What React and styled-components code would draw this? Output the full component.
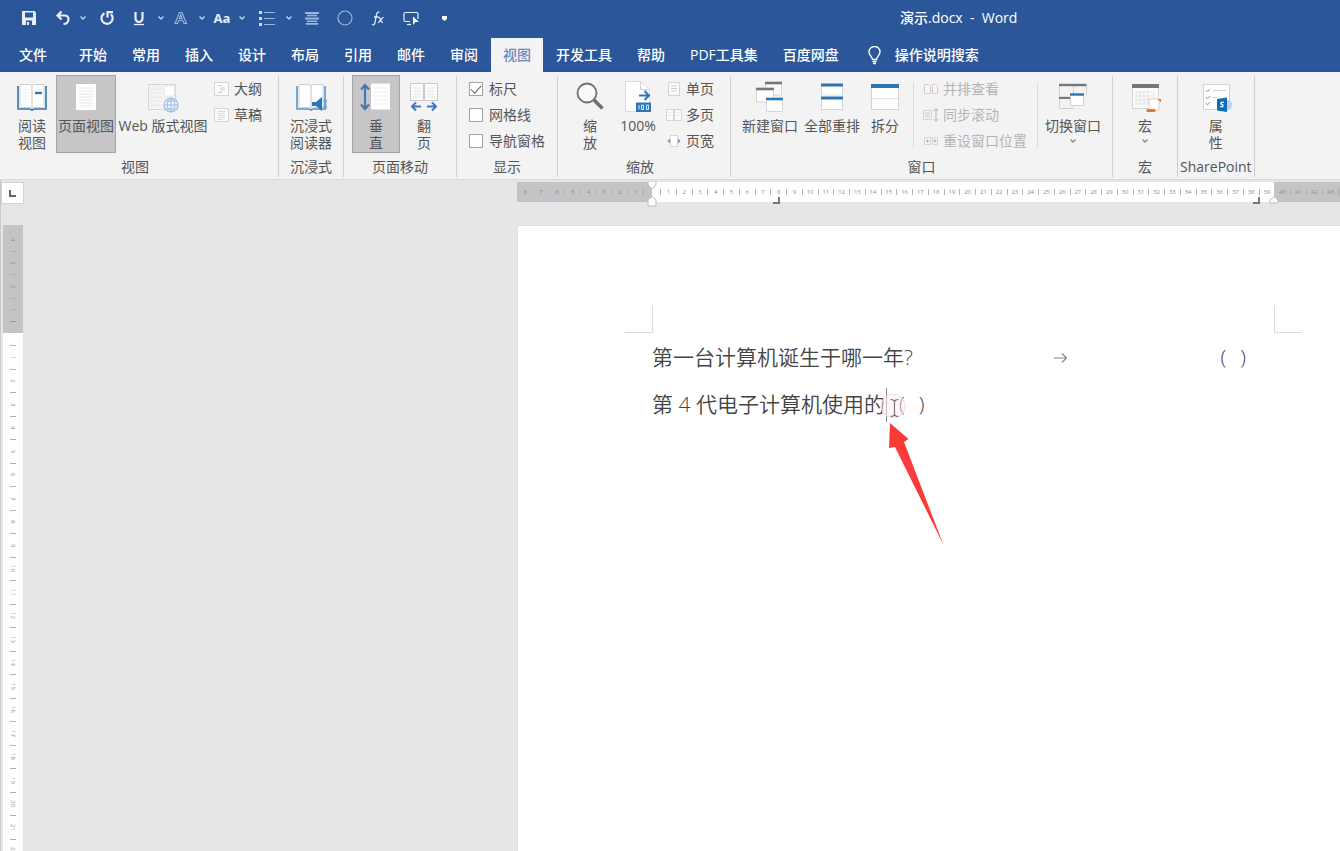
import React from "react";
import styled, { createGlobalStyle, css } from "styled-components";

const GlobalStyle = createGlobalStyle`
    * {
        box-sizing: border-box;
    }

    body {
        margin: 0;
        background-color: #e6e6e8;
        font-family: "Open Sans", "Noto Sans CJK SC", sans-serif;
        font-size: 14px;
    }

    button, input {
        font: inherit;
        color: inherit;
    }
`;

const Window = styled.div`
    display: flex;
    flex-direction: column;
    height: 100vh;
    overflow: hidden;
`;

/* ---------- title bar ---------- */

const TitleBar = styled.header`
    display: flex;
    align-items: center;
    height: 38px;
    padding: 0 0 2px 19px;
    background-color: #2b579a;
    color: #fff;
`;

const QuickAccess = styled.div`
    display: flex;
    align-items: center;
    flex: 0 0 881px;
`;

const QuickButton = styled.button`
    display: flex;
    align-items: center;
    justify-content: center;
    width: 20px;
    height: 24px;
    margin-right: ${(props) => props.$gap || 0}px;
    padding: 0;
    border: 0;
    background: none;
    color: ${(props) => (props.$dim ? "#9db6dc" : "#e8effa")};
    font-size: 13px;
    font-weight: bold;
`;

const FileName = styled.h1`
    margin: 0;
    font-size: 14px;
    font-weight: 500;
    line-height: 20px;
    white-space: pre;
`;

/* ---------- tabs ---------- */

const Tabs = styled.nav`
    display: flex;
    gap: 1px;
    height: 34px;
    background-color: #2b579a;
    border-bottom: 2px solid #1d57a3;
`;

const Tab = styled.button`
    height: 34px;
    padding: 0 12px;
    margin-left: ${(props) => (props.$first ? 7 : 0)}px;
    margin-right: ${(props) => (props.$first ? 7 : 0)}px;
    border: 0;
    background: none;
    color: #fff;
    font-weight: 500;
    line-height: 34px;
    white-space: nowrap;

    ${(props) => props.$active && css`
        background-color: #f3f3f4;
        color: #6f87b8;
    `}
`;

const TellMe = styled.button`
    display: flex;
    align-items: center;
    gap: 14px;
    height: 34px;
    margin-left: 16px;
    padding: 0;
    border: 0;
    background: none;
    color: #fff;
    font-weight: 500;
    line-height: 34px;
    white-space: nowrap;
`;

/* ---------- ribbon ---------- */

const Ribbon = styled.section`
    display: flex;
    flex: 0 0 106px;
    background-color: #f3f3f4;
    border-bottom: 1px solid #d9d9db;
    color: #555;
`;

const Group = styled.div`
    display: flex;
    flex-direction: column;
    align-items: center;
    margin: 4px 0 2px;
    padding: 0 ${(props) => props.$right || 8}px 0 ${(props) => props.$left || 8}px;
    border-right: 1px solid #cfcfd1;
`;

const Tools = styled.div`
    display: flex;
    align-items: flex-start;
    flex: 0 0 80px;
`;

const GroupName = styled.div`
    font-size: 14px;
    line-height: 21px;
    white-space: nowrap;
`;

const BigButton = styled.button`
    display: flex;
    flex-direction: column;
    align-items: center;
    gap: 4px;
    width: ${(props) => props.$width || 48}px;
    height: 78px;
    margin-top: -1px;
    padding: 5px 0 0;
    border: 1px solid ${(props) => (props.$active ? "#a3a2a4" : "transparent")};
    background-color: ${(props) => (props.$active ? "#c6c5c8" : "transparent")};
    line-height: 17px;
    white-space: pre;
`;

const SmallList = styled.div`
    display: flex;
    flex-direction: column;
    padding-left: ${(props) => props.$left || 0}px;
`;

const SmallButton = styled.button`
    display: flex;
    align-items: center;
    gap: 4px;
    height: 26px;
    padding: 0;
    border: 0;
    background: none;
    line-height: 26px;
    white-space: nowrap;

    &:disabled {
        color: #b4b4b6;
    }
`;

const CheckLabel = styled.label`
    display: flex;
    align-items: center;
    gap: 6px;
    height: 26px;
    line-height: 26px;
    white-space: nowrap;
`;

const CheckBox = styled.input`
    appearance: none;
    display: grid;
    place-items: center;
    width: 14px;
    height: 14px;
    margin: 0;
    border: 1px solid #a3a3a5;
    background-color: #fff;

    &:checked::after {
        content: "";
        width: 9px;
        height: 5px;
        margin-bottom: 3px;
        border-left: 1px solid #666;
        border-bottom: 1px solid #666;
        transform: rotate(-48deg);
    }
`;

const Divider = styled.div`
    width: 1px;
    height: 66px;
    margin: 6px ${(props) => props.$right || 0}px 0 ${(props) => props.$left || 0}px;
    background-color: #dcdcde;
`;

/* ---------- work area ---------- */

const WorkArea = styled.main`
    display: grid;
    grid-template-columns: 23px minmax(0, 1fr);
    grid-template-rows: 46px minmax(0, 1fr);
    flex: 1;
    min-height: 0;
    border-left: 1px solid #c9c9cb;
    background-color: #e6e6e8;
`;

const TabStop = styled.button`
    display: flex;
    align-items: center;
    justify-content: center;
    width: 23px;
    height: 22px;
    margin-top: 2px;
    padding: 0;
    border: 1px solid #d2d2d4;
    background-color: #fff;
`;

const TopRuler = styled.div`
    display: flex;
    height: 20px;
    margin: 2px 0 0 493px;
    color: #8d8d8f;
    font-size: 6px;
    line-height: 20px;
`;

const TopStrip = styled.div`
    position: relative;
    display: flex;
    align-items: center;
    flex: ${(props) => (props.$width ? `0 0 ${props.$width}px` : "1 1 0")};
    min-width: 0;
    padding: 0 ${(props) => props.$right || 0}px 0 ${(props) => props.$left || 0}px;
    background-color: ${(props) => (props.$margin ? "#c4c3c6" : "#fff")};
`;

const TopCell = styled.div`
    flex: ${(props) => (props.$fixed ? "0 0 16px" : "1 1 0")};
    height: 6px;
    border-left: 1px solid ${(props) => (props.$plain ? "transparent" : "#b5b5b7")};
    line-height: 6px;
    text-align: center;
`;

const EndTick = styled.div`
    width: 1px;
    height: 6px;
    background-color: #a5a5a7;
`;

const Marker = styled.svg`
    position: absolute;
    left: ${(props) => props.$x}px;
    top: ${(props) => props.$y}px;
    z-index: 1;
`;

const SideRuler = styled.div`
    display: flex;
    flex-direction: column;
    width: 20px;
    margin: -1px 0 0 2px;
    min-height: 0;
    overflow: hidden;
    background-color: #fff;
    color: #8d8d8f;
    font-size: 6px;
`;

const SideStrip = styled.div`
    display: flex;
    flex-direction: column;
    align-items: center;
    flex: 0 0 ${(props) => props.$height}px;
    padding: ${(props) => (props.$margin ? "2px 0 11px" : "12px 0 0")};
    background-color: ${(props) => (props.$margin ? "#c4c3c6" : "#fff")};
`;

const SideCell = styled.div`
    display: flex;
    align-items: center;
    justify-content: center;
    flex: 1 1 0;
    width: 6px;
    min-height: 0;
    border-top: 1px solid ${(props) => (props.$first ? "transparent" : "#b0b0b2")};
    writing-mode: vertical-rl;
`;

const SideTick = styled.div`
    width: 6px;
    height: 1px;
    background-color: #98989a;
`;

const Page = styled.article`
    margin-left: 494px;
    padding: 80px 38px 0 107px;
    background-color: #fff;
    box-shadow: 0 0 0 1px #e0e0e1;
    color: #444;
    font-size: 21px;
    font-weight: 350;
`;

const CropMarks = styled.div`
    display: flex;
    justify-content: space-between;
    margin-bottom: 1px;
`;

const CropMark = styled.div`
    width: 28px;
    height: 27px;
    border-bottom: 1px solid #dadada;
    border-left: ${(props) => (props.$right ? "1px solid #dadada" : "0")};
    border-right: ${(props) => (props.$right ? "0" : "1px solid #dadada")};
`;

const Paragraph = styled.p`
    display: flex;
    margin: 0 56px 0 27px;
    line-height: 47px;
    white-space: pre;
`;

const Answer = styled.span`
    display: flex;
    gap: 14px;
`;

const TabMark = styled.span`
    display: flex;
    align-items: center;
    justify-content: center;
    flex: 1;
    padding-right: 12px;
`;

const Insertion = styled.span`
    position: relative;
    width: 14px;
`;

const Caret = styled.span`
    position: absolute;
    left: 1px;
    top: 7px;
    width: 1px;
    height: 34px;
    background-color: #888;
`;

const Pointer = styled.svg`
    position: absolute;
    left: -5px;
    top: 7px;
    overflow: visible;
`;

/* ---------- icons ---------- */

const BLUE = "#2e75b6";

const Chevron = ({ color = "#c5d3ea" }) => (
    <svg width="8" height="6" viewBox="0 0 8 6" fill="none" stroke={color} strokeWidth="1.4">
        <path d="M1.5 1.5 4 4l2.500-2.500" />
    </svg>
);

const SaveIcon = () => (
    <svg width="14" height="14" viewBox="0 0 14 14">
        <path d="M0 0h12.500L14 1.500V14H0z" fill="currentColor" />
        <path d="M3 1.500h8v5H3zM4 9.500h6V14H4z" fill="#2b579a" />
        <path d="M5 11h2v3H5z" fill="currentColor" />
    </svg>
);

const UndoIcon = () => (
    <svg width="16" height="16" viewBox="0 0 16 16" fill="none" stroke="currentColor" strokeWidth="2.200">
        <path d="M6.500 1.500 2.500 5.500l4 4M3 5.500h6.500c3 0 4 1.600 4 3.800S12 14 8.500 14" />
    </svg>
);

const RedoIcon = () => (
    <svg width="16" height="16" viewBox="0 0 16 16" fill="none" stroke="currentColor" strokeWidth="2.200">
        <path d="M5.500 3.200a5.600 5.600 0 1 0 6.500 1M8.500 7.500V2.200H14" />
    </svg>
);

const UnderlineIcon = () => (
    <svg width="12" height="15" viewBox="0 0 12 15" fill="none" stroke="currentColor">
        <path d="M2.500 1v6.500a3.500 3.500 0 0 0 7 0V1" strokeWidth="2.200" />
        <path d="M1 13.500h10" strokeWidth="1.300" />
    </svg>
);

const OutlineAIcon = () => (
    <svg width="14" height="14" viewBox="0 0 14 14" fill="none" stroke="currentColor" strokeWidth="1.100">
        <path d="M1 12.500 5.500 1.500h2.500l4.500 11h-2.500l-1-2.700H4.500l-1 2.700zM5.300 7.600h3L6.800 3.800z" />
    </svg>
);

const BulletsIcon = () => (
    <svg width="16" height="15" viewBox="0 0 16 15" fill="currentColor">
        <path d="M0 0h3v3H0zM0 6h3v3H0zM0 12h3v3H0z" fill="#cbd9ef" />
        <path d="M5 1h11v1H5zM5 7h11v1H5zM5 13h11v1H5z" />
    </svg>
);

const CenterIcon = () => (
    <svg width="14" height="13" viewBox="0 0 14 13" fill="currentColor">
        <path d="M0 0h14v2H0zM2 2.800h10v1.500H2zM0 5.500h14v2H0zM2 8.400h10v1.500H2zM1 11h12v1.800H1z" />
    </svg>
);

const CircleIcon = () => (
    <svg width="16" height="16" viewBox="0 0 16 16" fill="none" stroke="currentColor" strokeWidth="1.200">
        <circle cx="8" cy="8" r="7" />
    </svg>
);

const FormulaIcon = () => (
    <svg width="14" height="15" viewBox="0 0 14 15" fill="none" stroke="currentColor" strokeWidth="1.300">
        <path d="M8.500 1.500C6.500.500 5.700 2 5.300 4.500L4 11.500c-.400 2-1.300 2.800-3 2M3 6h4.500M7.500 6.500c2-1 2 5.500 4.500 5M12.500 6.300c-2 0-3.500 5.500-5.500 5.200" />
    </svg>
);

const ShapeRunIcon = () => (
    <svg width="17" height="15" viewBox="0 0 17 15" fill="none" stroke="currentColor" strokeWidth="1.200">
        <path d="M7 10.500H2.500a1.500 1.500 0 0 1-1.500-1.500V3a1.500 1.500 0 0 1 1.500-1.500h11A1.500 1.500 0 0 1 15 3v5" />
        <path d="M10 5.500 16 11h-3.500L10 14z" fill="#fff" stroke="none" />
        <path d="M4 13.500h4" />
    </svg>
);

const BulbIcon = () => (
    <svg width="13" height="19" viewBox="0 0 13 19" fill="none" stroke="#fff" strokeWidth="1.400">
        <path d="M4.500 13.500C4.500 11 1 9.500 1 6a5.500 5.500 0 0 1 11 0c0 3.500-3.500 5-3.500 7.500z" />
        <path d="M4.500 15.500h4M5 17.500h3" />
    </svg>
);

const Big = ({ children }) => (
    <svg width="32" height="32" viewBox="0 0 32 32" fill="none">{children}</svg>
);

const ReadIcon = () => (
    <Big>
        <path d="M2 5v23h12l2 1 2-1h12V5" stroke={BLUE} strokeWidth="1.600" />
        <path d="M4 3.500h10l2 1 2-1h10v23H18l-2 1-2-1H4z" fill="#fff" stroke="#d0d0d2" />
        <path d="M16 5v22" stroke="#c4c4c6" />
        <path d="M6.500 9h7M6.500 12h7M6.500 15h7M6.500 18h7M19 9h7" stroke="#ececee" />
        <path d="M19 12h7" stroke={BLUE} strokeWidth="2.400" />
    </Big>
);

const PageIcon = () => (
    <Big>
        <path d="M6 3h20v26H6z" fill="#fff" />
        <path d="M9 7h14M9 10h14M9 13h14M9 16h14M9 19h14M9 22h14M9 25h14" stroke="#e6e6e8" />
    </Big>
);

const WebIcon = () => (
    <Big>
        <path d="M1.500 3.500h27v25h-27z" fill="#f3f3f4" stroke="#d6d6d8" />
        <path d="M4 8h10M4 12h10M4 16h10M4 20h10M4 24h10" stroke="#e6e6e8" />
        <path d="M17 5h10v10H17z" fill="#fff" stroke="#e6e6e8" />
        <circle cx="24" cy="24" r="7" fill="#eef4fc" stroke="#9dbbe2" strokeWidth="1.200" />
        <path d="M17 24h14M24 17v14M18.500 20h11M18.500 28h11M24 17c-5 4-5 10 0 14M24 17c5 4 5 10 0 14" stroke="#9dbbe2" />
    </Big>
);

const ImmersiveIcon = () => (
    <Big>
        <path d="M2 5v23h12l2 1 2-1h12V5" stroke="#5b93cb" strokeWidth="1.600" />
        <path d="M4 3.500h10l2 1.500 2-1.500h10v23H18l-2 1-2-1H4z" fill="#fff" stroke="#d0d0d2" />
        <path d="M16 5v22" stroke="#c4c4c6" />
        <path d="M17 21h4l6-5v14l-6-5h-4z" fill={BLUE} />
        <path d="M28.500 19.500q3 3.500 0 7M30 17q4.500 6 0 12" stroke="#6f9fd2" />
    </Big>
);

const VerticalIcon = () => (
    <Big>
        <path d="M11 2.500h19v26H11z" fill="#fff" />
        <path d="M14 7h13M14 11h13M14 15h13M14 19h13M14 23h13" stroke="#ececee" />
        <path d="M5 5v22M1 8.500 5 4l4 4.500M1 23.500 5 28l4-4.500" stroke="#4577b4" strokeWidth="2.200" />
    </Big>
);

const FlipIcon = () => (
    <Big>
        <path d="M2.500 2.500h13v17h-13zM16.500 2.500h13v17h-13z" fill="#fbfbfb" stroke="#c8c8ca" />
        <path d="M5 7h8M5 10h8M5 13h8M5 16h8M19 7h8M19 10h8M19 13h8M19 16h8" stroke="#e8e8ea" />
        <path d="M4 25.500h9M19 25.500h9M8 21.500l-4 4 4 4M24 21.500l4 4-4 4" stroke="#3e79bf" strokeWidth="2" />
    </Big>
);

const ZoomIcon = () => (
    <Big>
        <circle cx="13" cy="12" r="9.500" fill="#fafafa" stroke="#6f6f70" strokeWidth="1.800" />
        <path d="m20 19 8.500 8.500" stroke="#6f6f70" strokeWidth="3.600" />
    </Big>
);

const HundredIcon = () => (
    <Big>
        <path d="M3.500.500h15l9 8v22h-24z" fill="#fff" stroke="#dadadc" />
        <path d="M18.500.500v8h9" stroke="#d0d0d2" />
        <path d="M17 14.500h10M22.500 10l4.500 4.500-4.500 4.500" stroke={BLUE} strokeWidth="2" />
        <path d="M14 21.500h15V31H14z" fill={BLUE} />
        <path d="M17 24v4.500M19.500 24h2v4.500h-2zM24.500 24h2v4.500h-2z" stroke="#d6e6f8" />
    </Big>
);

const NewWindowIcon = () => (
    <Big>
        <path d="M11.500 2v12h16V2" fill="#fafafa" stroke="#d4d4d6" />
        <path d="M11 2h17" stroke="#777" strokeWidth="2.600" />
        <path d="M2.500 8v13h17V8" fill="#fff" stroke="#d4d4d6" />
        <path d="M2 8h18" stroke="#777" strokeWidth="2.600" />
        <path d="M12.500 18v12.500h16V18" fill="#fff" stroke="#d4d4d6" />
        <path d="M12 18h17" stroke={BLUE} strokeWidth="2.600" />
    </Big>
);

const ArrangeIcon = () => (
    <Big>
        <path d="M5.500 3.500h21v25h-21z" fill="#fff" stroke="#d4d4d6" />
        <path d="M5 4h22M5 17h22" stroke={BLUE} strokeWidth="2.800" />
        <path d="M5 14h22" stroke="#e4e4e6" />
    </Big>
);

const SplitIcon = () => (
    <Big>
        <path d="M2.500 4.500h27v24h-27z" fill="#fff" stroke="#d4d4d6" />
        <path d="M2 5h28" stroke={BLUE} strokeWidth="4" />
        <path d="M3 17.500h26" stroke="#e4e4e6" />
    </Big>
);

const SwitchIcon = () => (
    <Big>
        <path d="M2.500 4v23.500H17M16.500 4v10M29.500 4v10M3 16h12" stroke="#d0d0d2" />
        <path d="M2 4h27.500" stroke="#777" strokeWidth="2.400" />
        <path d="M2 17h12" stroke="#777" strokeWidth="2" />
        <path d="M13.500 13v11.500h13V13" fill="#fff" stroke="#d0d0d2" />
        <path d="M13 13.500h14" stroke={BLUE} strokeWidth="2.400" />
    </Big>
);

const MacroIcon = () => (
    <Big>
        <path d="M3.500 4.500h26v23h-26z" fill="#fafafa" stroke="#d4d4d6" />
        <path d="M3 5h27" stroke="#777" strokeWidth="4" />
        <path d="M7 11h18v12H7zM7 15h18M7 19h18M11 11v12M15 11v12M19 11v12" stroke="#e2e2e4" />
        <path d="M20 18h10v11H20z" fill="#fff" stroke="#f0cdb4" />
        <path d="M29 18.500h2.500V21M18 28.500h8v2h-8z" fill="#e07b35" stroke="#e07b35" />
    </Big>
);

const PropertyIcon = () => (
    <Big>
        <path d="M3.500 3.500h26v25h-26z" fill="#fff" stroke="#d4d4d6" />
        <path d="m6 9 1.500 2L10 8M6 16l1.500 2 2.500-3M6 22l1.500 2 2.500-3" stroke="#999" />
        <path d="M13 9.500h13M13 16.500h4" stroke="#d0d0d2" />
        <circle cx="27" cy="24" r="5" fill="#b9d4f0" />
        <path d="m17 18 10-1.500V31L17 29.500z" fill="#0f6cbd" />
        <path d="M24 21.500c-3-1-4 1-2 2s1 3-2 2" stroke="#fff" strokeWidth="1.300" />
    </Big>
);

const Small = ({ children }) => (
    <svg width="16" height="16" viewBox="0 0 16 16" fill="none">{children}</svg>
);

const OutlineIcon = () => (
    <Small>
        <path d="M.500 1.500h14v13H.500z" fill="#fbfbfb" stroke="#d4d4d6" />
        <path d="M4 4.500h4M6 7h5M6 9h5M4 11.500h4" stroke="#d0d0d2" />
    </Small>
);

const DraftIcon = () => (
    <Small>
        <path d="M.500 1.500h14v13H.500z" fill="#fbfbfb" stroke="#d4d4d6" />
        <path d="M4 4.500h7M4 6.500h7M4 8.500h7M4 10.500h7M4 12.500h5" stroke="#dadadc" />
    </Small>
);

const OnePageIcon = () => (
    <Small>
        <path d="M2.500 1.500h11v13h-11z" fill="#fbfbfb" stroke="#d4d4d6" />
        <path d="M5 5h6M5 7.500h6M5 10h6" stroke="#d0d0d2" />
    </Small>
);

const TwoPageIcon = () => (
    <Small>
        <path d="M.500 2.500h7v11h-7zM8.500 2.500h7v11h-7z" fill="#fbfbfb" stroke="#d4d4d6" />
        <path d="M2.500 5.500h3M2.500 8h3M10.500 5.500h3M10.500 8h3" stroke="#e2e2e4" />
    </Small>
);

const PageWidthIcon = () => (
    <Small>
        <path d="M4.500 2.500h7v11h-7z" fill="#fff" stroke="#d4d4d6" />
        <path d="M4 5.500 1.500 8 4 10.500zM12 5.500l2.500 2.500-2.500 2.500z" fill="#7596c4" />
    </Small>
);

const SideBySideIcon = () => (
    <Small>
        <path d="M1.500 3.500h4l2 2v7h-6zM9.500 3.500h3l2 2v7h-5z" fill="#faf5f7" stroke="#d6cbd0" />
    </Small>
);

const SyncIcon = () => (
    <Small>
        <path d="M.500 3.500h8v9h-8zM2 6h5M2 8h5M2 10h5" stroke="#d4d4d6" />
        <path d="M13 2v12M11 4l2-2.500L15 4M11 12l2 2.500 2-2.500" stroke="#b5b5b7" />
    </Small>
);

const ResetIcon = () => (
    <Small>
        <path d="M1.500 4.500h6v7h-6zM9.500 4.500h5v7h-5z" stroke="#d9d1d4" />
        <path d="M3 8h3M4.500 6.500v3M10.500 8h3M12 6.500v3" stroke="#c9a5ae" />
    </Small>
);

const IndentTop = () => <path d="M1 0h8v4L5 7.500 1 4z" fill="#fff" stroke="#bcbcbe" />;

const IndentBottom = () => <path d="M1 10V4l4-3.500L9 4v6z" fill="#fff" stroke="#bcbcbe" />;

const menuTabs = ["开始", "常用", "插入", "设计", "布局", "引用", "邮件", "审阅", "视图", "开发工具", "帮助", "PDF工具集", "百度网盘"];

const range = (from, to) => {
    const step = from < to ? 1 : -1;
    return Array.from({ length: Math.abs(to - from) + 1 }, (_, i) => from + i * step);
};

const App = () => {
    return (
        <Window>
            <GlobalStyle />
            <TitleBar>
                <QuickAccess>
                    <QuickButton aria-label="保存" $gap={14}><SaveIcon /></QuickButton>
                    <QuickButton aria-label="撤消"><UndoIcon /></QuickButton>
                    <QuickButton aria-label="撤消选项" $gap={4}><Chevron /></QuickButton>
                    <QuickButton aria-label="恢复" $gap={12}><RedoIcon /></QuickButton>
                    <QuickButton aria-label="下划线" $gap={2}><UnderlineIcon /></QuickButton>
                    <QuickButton aria-label="下划线选项"><Chevron /></QuickButton>
                    <QuickButton aria-label="文本效果" $dim $gap={1}><OutlineAIcon /></QuickButton>
                    <QuickButton aria-label="文本效果选项"><Chevron /></QuickButton>
                    <QuickButton>Aa</QuickButton>
                    <QuickButton aria-label="更改大小写选项" $gap={5}><Chevron /></QuickButton>
                    <QuickButton aria-label="项目符号" $dim $gap={2}><BulletsIcon /></QuickButton>
                    <QuickButton aria-label="项目符号选项" $gap={3}><Chevron /></QuickButton>
                    <QuickButton aria-label="居中" $dim $gap={13}><CenterIcon /></QuickButton>
                    <QuickButton aria-label="椭圆" $dim $gap={13}><CircleIcon /></QuickButton>
                    <QuickButton aria-label="公式" $gap={13}><FormulaIcon /></QuickButton>
                    <QuickButton aria-label="形状" $gap={13}><ShapeRunIcon /></QuickButton>
                    <QuickButton aria-label="自定义快速访问工具栏">
                        <svg width="5" height="5" viewBox="0 0 5 5"><path d="M0 0h5v3L2.500 5 0 3z" fill="#fff" /></svg>
                    </QuickButton>
                </QuickAccess>
                <FileName>演示.docx  -  Word</FileName>
            </TitleBar>
            <Tabs>
                <Tab $first>文件</Tab>
                {menuTabs.map((name) => (
                    <Tab key={name} $active={name === "视图"}>{name}</Tab>
                ))}
                <TellMe><BulbIcon />操作说明搜索</TellMe>
            </Tabs>
            <Ribbon>
                <Group $left={8} $right={16}>
                    <Tools>
                        <BigButton><ReadIcon />{"阅读\n视图"}</BigButton>
                        <BigButton $active $width={60}><PageIcon />页面视图</BigButton>
                        <BigButton $width={94}><WebIcon />Web 版式视图</BigButton>
                        <SmallList $left={4}>
                            <SmallButton><OutlineIcon />大纲</SmallButton>
                            <SmallButton><DraftIcon />草稿</SmallButton>
                        </SmallList>
                    </Tools>
                    <GroupName>视图</GroupName>
                </Group>
                <Group>
                    <Tools>
                        <BigButton><ImmersiveIcon />{"沉浸式\n阅读器"}</BigButton>
                    </Tools>
                    <GroupName>沉浸式</GroupName>
                </Group>
                <Group>
                    <Tools>
                        <BigButton $active><VerticalIcon />{"垂\n直"}</BigButton>
                        <BigButton><FlipIcon />{"翻\n页"}</BigButton>
                    </Tools>
                    <GroupName>页面移动</GroupName>
                </Group>
                <Group $left={12} $right={12}>
                    <Tools>
                        <SmallList>
                            <CheckLabel><CheckBox type="checkbox" defaultChecked />标尺</CheckLabel>
                            <CheckLabel><CheckBox type="checkbox" />网格线</CheckLabel>
                            <CheckLabel><CheckBox type="checkbox" />导航窗格</CheckLabel>
                        </SmallList>
                    </Tools>
                    <GroupName>显示</GroupName>
                </Group>
                <Group $left={8} $right={16}>
                    <Tools>
                        <BigButton><ZoomIcon />{"缩\n放"}</BigButton>
                        <BigButton><HundredIcon />100%</BigButton>
                        <SmallList $left={4}>
                            <SmallButton><OnePageIcon />单页</SmallButton>
                            <SmallButton><TwoPageIcon />多页</SmallButton>
                            <SmallButton><PageWidthIcon />页宽</SmallButton>
                        </SmallList>
                    </Tools>
                    <GroupName>缩放</GroupName>
                </Group>
                <Group>
                    <Tools>
                        <BigButton $width={62}><NewWindowIcon />新建窗口</BigButton>
                        <BigButton $width={62}><ArrangeIcon />全部重排</BigButton>
                        <BigButton $width={44}><SplitIcon />拆分</BigButton>
                        <Divider $left={6} $right={9} />
                        <SmallList>
                            <SmallButton disabled><SideBySideIcon />并排查看</SmallButton>
                            <SmallButton disabled><SyncIcon />同步滚动</SmallButton>
                            <SmallButton disabled><ResetIcon />重设窗口位置</SmallButton>
                        </SmallList>
                        <Divider $left={10} $right={4} />
                        <BigButton $width={62}>
                            <SwitchIcon />切换窗口
                            <Chevron color="#888" />
                        </BigButton>
                    </Tools>
                    <GroupName>窗口</GroupName>
                </Group>
                <Group>
                    <Tools>
                        <BigButton>
                            <MacroIcon />宏
                            <Chevron color="#888" />
                        </BigButton>
                    </Tools>
                    <GroupName>宏</GroupName>
                </Group>
                <Group $left={2} $right={2}>
                    <Tools>
                        <BigButton><PropertyIcon />{"属\n性"}</BigButton>
                    </Tools>
                    <GroupName>SharePoint</GroupName>
                </Group>
            </Ribbon>
            <WorkArea>
                <TabStop aria-label="制表符">
                    <svg width="7" height="7" viewBox="0 0 7 7"><path d="M1 0v6h6" fill="none" stroke="#666" strokeWidth="2" /></svg>
                </TabStop>
                <TopRuler>
                    <TopStrip $margin $width={135} $right={8}>
                        {range(8, 1).map((n) => <TopCell key={n}>{n}</TopCell>)}
                        <EndTick />
                    </TopStrip>
                    <TopStrip $width={622} $left={8}>
                        <Marker $x={-5} $y={-1} width="10" height="8"><IndentTop /></Marker>
                        <Marker $x={-5} $y={14} width="10" height="11"><IndentBottom /></Marker>
                        {range(1, 39).map((n) => <TopCell key={n}>{n}</TopCell>)}
                        <Marker $x={121} $y={15} width="7" height="7"><path d="M6 0v6H0" fill="none" stroke="#777" strokeWidth="2" /></Marker>
                        <Marker $x={601} $y={15} width="7" height="7"><path d="M6 0v6H0" fill="none" stroke="#777" strokeWidth="2" /></Marker>
                        <Marker $x={617} $y={14} width="10" height="8"><path d="M1 7V4l4-3.500L9 4v3z" fill="#fff" stroke="#bcbcbe" /></Marker>
                    </TopStrip>
                    <TopStrip $margin>
                        {range(40, 43).map((n) => <TopCell $fixed $plain={n === 40} key={n}>{n}</TopCell>)}
                        <EndTick />
                    </TopStrip>
                </TopRuler>
                <SideRuler>
                    <SideStrip $margin $height={108}>
                        {range(4, 1).map((n) => <SideCell $first={n === 4} key={n}>{n}</SideCell>)}
                        <SideTick />
                    </SideStrip>
                    <SideStrip $height={529}>
                        {range(1, 22).map((n) => <SideCell key={n}>{n}</SideCell>)}
                    </SideStrip>
                </SideRuler>
                <Page>
                    <CropMarks>
                        <CropMark />
                        <CropMark $right />
                    </CropMarks>
                    <Paragraph>
                        第一台计算机诞生于哪一年?
                        <TabMark>
                            <svg width="14" height="12" viewBox="0 0 14 12" fill="none" stroke="#888" strokeWidth="1.200">
                                <path d="M0 6h12.500M8 1.500 12.500 6 8 10.500" />
                            </svg>
                        </TabMark>
                        <Answer><span>(</span><span>)</span></Answer>
                    </Paragraph>
                    <Paragraph>
                        第 4 代电子计算机使用的
                        <Insertion>
                            <Caret />
                            <Pointer width="70" height="160" viewBox="0 0 70 160" fill="none">
                                <circle cx="13" cy="18" r="12" fill="#fdeef1" fillOpacity="0.500" stroke="#f9dbe1" />
                                <path d="M10.500 11.500q3.500 0 4 2 .500-2 4-2M14.500 13v14M10.500 28.500q3.500 0 4-2 .500 2 4 2" stroke="#777" strokeWidth="1.200" />
                                <path d="M10 35 28.500 51l-4.500 3L63.500 157 15 59l-6 1z" fill="#fb3a3a" />
                            </Pointer>
                        </Insertion>
                        <Answer><span>(</span><span>)</span></Answer>
                    </Paragraph>
                </Page>
            </WorkArea>
        </Window>
    );
};

export default App;
